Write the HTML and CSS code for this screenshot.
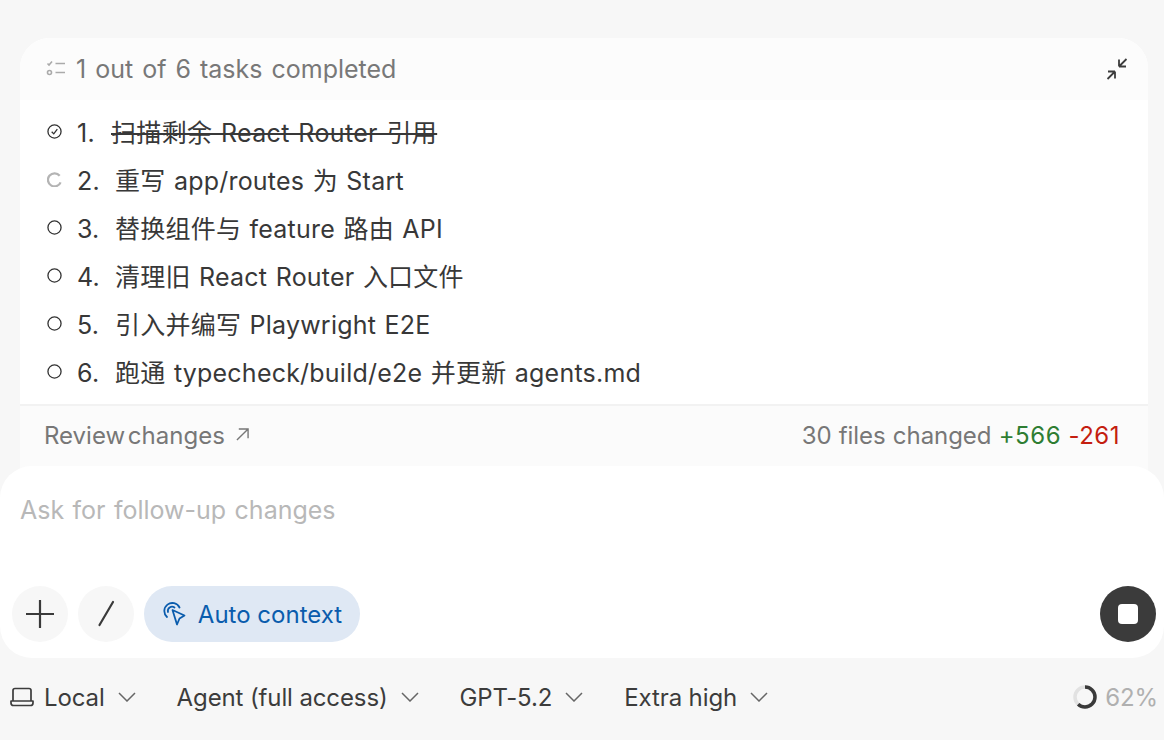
FILE: index.html
```html
<!DOCTYPE html>
<html lang="zh">
<head>
<meta charset="utf-8">
<title>Tasks</title>
<link rel="stylesheet" href="styles.css">
</head>
<body>
<main class="page">
  <section class="card">
    <header class="card-head">
      <svg class="head-icon" viewBox="0 0 20 20"><path d="M1.500 4.500 3 6 6 2.500M9.500 4.500H19M9.500 13.500H19"/><circle cx="3.500" cy="13.500" r="2"/></svg>
      <span class="head-title">1 out of 6 tasks completed</span>
      <svg class="collapse" viewBox="0 0 24 24"><path d="M14 9.500h7M14 9.500V2.500M14 9.500 21.500 2M10 14.500H3M10 14.500V21.500M10 14.500 2.500 22"/></svg>
    </header>
    <ol class="tasks">
      <li class="task">
        <svg class="mark" viewBox="0 0 16 16"><circle cx="8" cy="8" r="7"/><path d="M5 8.300 7.200 10.500 11 5.500"/></svg>
        <span class="num num-done">1.</span><span class="label done">扫描剩余 React Router 引用</span>
      </li>
      <li class="task">
        <svg class="mark mark-spin" viewBox="0 0 16 16"><path d="M13.500 4A7 7 0 1 0 14.500 11"/></svg>
        <span class="num">2.</span><span class="label">重写 app/routes 为 Start</span>
      </li>
      <li class="task">
        <svg class="mark" viewBox="0 0 16 16"><circle cx="8" cy="8" r="7"/></svg>
        <span class="num">3.</span><span class="label">替换组件与 feature 路由 API</span>
      </li>
      <li class="task">
        <svg class="mark" viewBox="0 0 16 16"><circle cx="8" cy="8" r="7"/></svg>
        <span class="num">4.</span><span class="label">清理旧 React Router 入口文件</span>
      </li>
      <li class="task">
        <svg class="mark" viewBox="0 0 16 16"><circle cx="8" cy="8" r="7"/></svg>
        <span class="num">5.</span><span class="label">引入并编写 Playwright E2E</span>
      </li>
      <li class="task">
        <svg class="mark" viewBox="0 0 16 16"><circle cx="8" cy="8" r="7"/></svg>
        <span class="num">6.</span><span class="label">跑通 typecheck/build/e2e 并更新 agents.md</span>
      </li>
    </ol>
    <footer class="card-foot">
      <span class="review">Review changes</span>
      <svg class="arrow" viewBox="0 0 14 14"><path d="M1 13 13 1M3 1h10v10"/></svg>
      <span class="stats">30 files changed <span class="plus">+566</span> <span class="minus">-261</span></span>
    </footer>
  </section>
  <section class="composer">
    <div class="placeholder">Ask for follow-up changes</div>
    <div class="tools">
      <button class="round" type="button"><svg class="tool-icon" viewBox="0 0 28 28"><path d="M14 0.500V27.500M0.500 14H27.500"/></svg></button>
      <button class="round" type="button"><svg class="tool-icon" viewBox="0 0 28 28"><path d="M21 2 7.500 25"/></svg></button>
      <button class="context" type="button">
        <svg class="context-icon" viewBox="0 0 24 24"><path d="M5 15A8 8 0 1 1 17.500 5.500"/><path d="M6 10A4.200 4.200 0 0 1 12.500 5.500"/><path d="M10.500 8 22.500 13.500 17.500 16.500 15 22.500Z"/></svg>
        Auto context
      </button>
      <button class="stop" type="button"><span class="stop-square"></span></button>
    </div>
  </section>
  <nav class="status">
    <span class="pick pick-local">
      <svg class="laptop" viewBox="0 0 24 20"><path d="M3 14V3.500Q3 1.500 5 1.500H19Q21 1.500 21 3.500V14M1 14H23V16Q23 18.500 20.500 18.500H3.500Q1 18.500 1 16Z"/></svg>
      Local<svg class="chev" viewBox="0 0 18 10"><path d="M1 1 9 9 17 1"/></svg>
    </span>
    <span class="pick">Agent (full access)<svg class="chev" viewBox="0 0 18 10"><path d="M1 1 9 9 17 1"/></svg></span>
    <span class="pick">GPT-5.2<svg class="chev" viewBox="0 0 18 10"><path d="M1 1 9 9 17 1"/></svg></span>
    <span class="pick">Extra high<svg class="chev" viewBox="0 0 18 10"><path d="M1 1 9 9 17 1"/></svg></span>
    <span class="usage">
      <svg class="ring" viewBox="0 0 24 24"><circle class="ring-bg" cx="12" cy="12" r="10"/><circle class="ring-fg" cx="12" cy="12" r="10" pathLength="100" stroke-dasharray="62 100" transform="rotate(-90 12 12)"/></svg>
      62%
    </span>
  </nav>
</main>
</body>
</html>
```
FILE: styles.css
```css
* { box-sizing: border-box; }
html, body { margin: 0; height: 100%; }
body {
  background: #f7f7f7;
  color: #333;
  font-family: Inter, "Noto Sans CJK SC", sans-serif;
  font-size: 24px;
  overflow: hidden;
}
svg { display: block; flex: none; fill: none; stroke: currentColor; }
.page { display: flex; flex-direction: column; height: 740px; padding-top: 38px; }

.card {
  margin: 0 16px -32px 20px;
  background: #fff;
  border-radius: 30px 30px 0 0;
  overflow: hidden;
}
.card-head {
  display: flex;
  align-items: center;
  height: 62px;
  padding: 0 19px 0 26px;
  background: #fcfcfc;
  color: #787878;
  font-size: 25px;
  word-spacing: 2px;
}
.head-icon { width: 20px; height: 20px; stroke: #aaa; stroke-width: 1.600; margin-right: 10px; }
.head-title { flex: 1; }
.collapse { width: 24px; height: 24px; color: #3c3c3c; stroke-width: 1.800; }

.tasks { list-style: none; margin: 0; padding: 9px 0 7px; }
.task {
  display: flex;
  align-items: baseline;
  height: 48px;
  padding-left: 27px;
  color: #383838;
  font-size: 25px;
  line-height: 48px;
  word-spacing: 1.200px;
  letter-spacing: .22px;
}
.mark { align-self: center; width: 15px; height: 15px; margin: -4px 15px 0 0; stroke: #333; stroke-width: 1.400; }
.mark-spin { stroke: #b4b4b4; stroke-width: 2.400; }
.num { width: 38px; }
.num-done { width: 34px; }
.done { text-decoration: line-through; letter-spacing: .35px; }

.card-foot {
  display: flex;
  align-items: center;
  height: 94px;
  padding: 0 28px 34px 24px;
  background: #fbfbfb;
  border-top: 2px solid #f2f2f2;
  color: #777;
}
.review { word-spacing: -4px; }
.arrow { width: 13px; height: 13px; margin: -2px 0 0 11px; stroke-width: 1.500; }
.stats { margin-left: auto; letter-spacing: -.05px; word-spacing: .5px; }
.plus { color: #2e7d32; letter-spacing: .6px; }
.minus { color: #c41e10; letter-spacing: .5px; }

.composer {
  position: relative;
  display: flex;
  flex-direction: column;
  height: 192px;
  padding: 28px 8px 16px 12px;
  background: #fff;
  border-radius: 32px;
}
.placeholder { flex: 1; padding-left: 8px; color: #b8b8b8; font-size: 25px; line-height: 32px; word-spacing: 1.400px; }
.tools { display: flex; align-items: center; gap: 10px; }
button { border: 0; padding: 0; font: inherit; display: flex; align-items: center; justify-content: center; }
.round { width: 56px; height: 56px; border-radius: 50%; background: #f7f7f7; color: #3a3a3a; }
.tool-icon { width: 28px; height: 28px; stroke-width: 2.200; stroke-linecap: round; }
.context {
  gap: 12px;
  width: 216px;
  height: 56px;
  border-radius: 28px;
  background: #dfe8f4;
  color: #0a5cad;
}
.context-icon { width: 24px; height: 24px; stroke-width: 1.800; stroke-linejoin: round; stroke-linecap: round; }
.stop { width: 56px; height: 56px; margin-left: auto; border-radius: 50%; background: #3b3b3b; }
.stop-square { width: 20px; height: 20px; border-radius: 4px; background: #fff; }

.status { flex: 1; display: flex; align-items: center; padding: 0 6px 4px 10px; color: #3c3c3c; letter-spacing: -.12px; }
.pick { display: flex; align-items: center; margin-right: 41px; }
.laptop { width: 24px; height: 20px; margin-right: 10px; stroke-width: 1.700; stroke-linejoin: round; }
.chev { width: 18px; height: 10px; margin-left: 13px; stroke: #666; stroke-width: 1.500; }
.usage { display: flex; align-items: center; gap: 8px; margin-left: auto; color: #b0b0b0; }
.ring { width: 24px; height: 24px; stroke-width: 3.500; }
.ring-bg { stroke: #e2e2e2; }
.ring-fg { stroke: #3a3a3a; }
```
